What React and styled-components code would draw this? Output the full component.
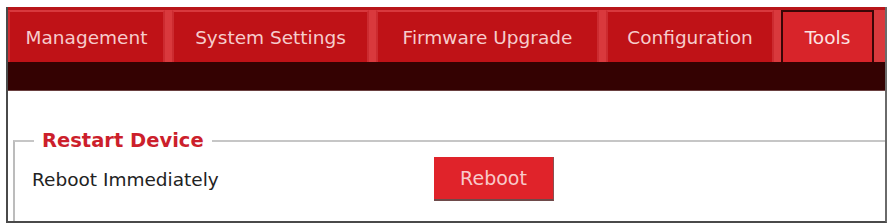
import React from "react";
import styled, { createGlobalStyle } from "styled-components";

const Global = createGlobalStyle`
  html, body { margin: 0; padding: 0; background: #ffffff; }
  body { font-family: "DejaVu Sans", Verdana, sans-serif; }
`;

const Frame = styled.div`
  margin: 7px 0 0 6px;
  width: 877px;
  border-left: 2px solid #4a4a4a;
  border-right: 2px solid #6a6a6a;
  border-bottom: 2px solid #4a4a4a;
  background: #fff;
`;

const TabBar = styled.div`
  display: flex;
  gap: 7px;
  height: 55px;
  box-sizing: border-box;
  padding-top: 3px;
  background: linear-gradient(#b81519 0, #b81519 3px, #d9393d 3px);
`;

const Tab = styled.div`
  box-sizing: border-box;
  width: ${(p) => p.$w}px;
  height: 52px;
  display: flex;
  align-items: center;
  justify-content: center;
  font-size: 18.5px;
  white-space: nowrap;
  color: ${(p) => (p.$active ? "#fbe3e3" : "#f6cccc")};
  background: ${(p) => (p.$active ? "#d8242a" : "#bf1217")};
  border: ${(p) => (p.$active ? "2px solid #3a0606" : "2px solid #cc2b30")};
  border-top-color: ${(p) => (p.$active ? "#3a0606" : "#d8383d")};
  border-bottom: none;
`;

const DarkBar = styled.div`
  height: 28px;
  background: #340202;
  border-bottom: 1px solid #6a4040;
`;

const Content = styled.div`
  height: 130px;
  box-sizing: border-box;
  padding-top: 38px;
  overflow: hidden;
`;

const Fieldset = styled.fieldset`
  margin: 0 0 0 5px;
  padding: 0 0 0 17px;
  border: none;
  border-top: 2px solid #c6c6c6;
  border-left: 2px solid #bcbcbc;
  height: 98px;
  min-width: 0;
`;

const Legend = styled.legend`
  margin-left: 2px;
  padding: 0 8px;
  font-size: 19.5px;
  font-weight: bold;
  color: #cc1f2c;
`;

const Row = styled.div`
  display: flex;
  align-items: center;
  margin-top: 5px;
`;

const Label = styled.span`
  width: 402px;
  font-size: 18.5px;
  color: #222;
  white-space: nowrap;
`;

const Button = styled.button`
  width: 120px;
  height: 44px;
  box-sizing: border-box;
  background: #e0232a;
  border: none;
  border-bottom: 2px solid #6e4a4a;
  border-right: 1px solid #8a5050;
  color: #f8caca;
  font-family: inherit;
  font-size: 19px;
  padding: 0;
`;

const tabs = [
  { label: "Management", w: 157 },
  { label: "System Settings", w: 197 },
  { label: "Firmware Upgrade", w: 223 },
  { label: "Configuration", w: 168 },
  { label: "Tools", w: 93, active: true },
];

export default function App() {
  return (
    <>
      <Global />
      <Frame>
        <TabBar>
          {tabs.map((t) => (
            <Tab key={t.label} $w={t.w} $active={t.active}>
              {t.label}
            </Tab>
          ))}
        </TabBar>
        <DarkBar />
        <Content>
          <Fieldset>
            <Legend>Restart Device</Legend>
            <Row>
              <Label>Reboot Immediately</Label>
              <Button>Reboot</Button>
            </Row>
          </Fieldset>
        </Content>
      </Frame>
    </>
  );
}
